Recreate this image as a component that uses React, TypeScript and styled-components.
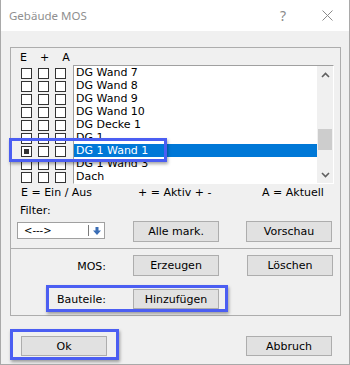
import React from 'react';
import styled, { createGlobalStyle } from 'styled-components';

const GlobalStyle = createGlobalStyle`
  html, body {
    margin: 0;
    padding: 0;
    background: #f0f0f0;
  }
  body {
    font-family: "DejaVu Sans", Tahoma, sans-serif;
    font-size: 11px;
    color: #000;
  }
`;

const items = [
  'DG Wand 7',
  'DG Wand 8',
  'DG Wand 9',
  'DG Wand 10',
  'DG Decke 1',
  'DG 1',
  'DG 1 Wand 1',
  'DG 1 Wand 3',
  'Dach',
];

const SELECTED = 6;

const Chevron = ({ up }: { up?: boolean }) => (
  <svg width="9" height="6" viewBox="0 0 9 6">
    <polyline
      points={up ? '1,5 4.5,1.5 8,5' : '1,1 4.5,4.5 8,1'}
      fill="none"
      stroke="#606060"
      strokeWidth="1.6"
    />
  </svg>
);

const App = () => {
  return (
    <>
      <GlobalStyle />
      <Window>
        <TitleBar>
          <Title>Gebäude MOS</Title>
          <CaptionButton>?</CaptionButton>
          <CaptionButton>
            <svg width="11" height="11" viewBox="0 0 11 11">
              <path d="M0.5 0.5L10.5 10.5M10.5 0.5L0.5 10.5" stroke="#8a8a8a" strokeWidth="1" />
            </svg>
          </CaptionButton>
        </TitleBar>

        <Content>
          <GroupBox>
            <HeaderRow>
              <span>E</span>
              <span>+</span>
              <span>A</span>
            </HeaderRow>

            <ListArea>
              <CheckGrid>
                {items.map((_, i) =>
                  [0, 1, 2].map((c) => (
                    <CheckBox key={`${i}-${c}`}>
                      {i === SELECTED && c === 0 && <CheckMark />}
                    </CheckBox>
                  ))
                )}
              </CheckGrid>

              <ListBox>
                <Rows>
                  {items.map((name, i) => (
                    <Row key={name} $selected={i === SELECTED}>
                      {name}
                    </Row>
                  ))}
                </Rows>
                <ScrollBar>
                  <ScrollArrow>
                    <Chevron up />
                  </ScrollArrow>
                  <Track>
                    <Thumb />
                  </Track>
                  <ScrollArrow>
                    <Chevron />
                  </ScrollArrow>
                </ScrollBar>
              </ListBox>
            </ListArea>

            <Legend>
              <span>E = Ein / Aus</span>
              <span>+ = Aktiv + -</span>
              <span>A = Aktuell</span>
            </Legend>

            <FilterLabel>Filter:</FilterLabel>

            <ControlRow>
              <Combo>
                <ComboText>&lt;---&gt;</ComboText>
                <ComboDrop>
                  <svg width="8" height="8" viewBox="0 0 8 8">
                    <path d="M2.5 0h3v3.5h2.5L4 8 0 3.5h2.5z" fill="#3a6db5" />
                  </svg>
                </ComboDrop>
              </Combo>
              <Button $gap={28}>Alle mark.</Button>
              <Button $gap={27}>Vorschau</Button>
            </ControlRow>

            <Divider />

            <ActionRow $top={6}>
              <RightLabel>MOS:</RightLabel>
              <Button $gap={27}>Erzeugen</Button>
              <Button $gap={28}>Löschen</Button>
            </ActionRow>

            <ActionRow $top={13}>
              <LeftLabel>Bauteile:</LeftLabel>
              <Button $h={20}>Hinzufügen</Button>
            </ActionRow>
          </GroupBox>

          <Footer>
            <Button $gap={20} $h={20}>Ok</Button>
            <Button $gap={139} $h={20}>Abbruch</Button>
          </Footer>
        </Content>

        <Highlight $x={8} $y={138} $w={158} $h={24} />
        <Highlight $x={45} $y={285} $w={182} $h={27} />
        <Highlight $x={9} $y={329} $w={109} $h={31} />
      </Window>
    </>
  );
};

const Window = styled.div`
  position: relative;
  width: 350px;
  height: 365px;
  box-sizing: border-box;
  border: 1px solid #a9a9a9;
  border-top: none;
  background: #f0f0f0;
  overflow: hidden;
`;

const TitleBar = styled.div`
  height: 31px;
  background: #fff;
  display: flex;
  align-items: center;
`;

const Title = styled.div`
  flex: 1;
  padding-left: 8px;
  font-family: "Noto Sans", "Segoe UI", sans-serif;
  font-size: 11.5px;
  color: #8f8f8f;
`;

const CaptionButton = styled.div`
  width: 44px;
  height: 31px;
  display: flex;
  align-items: center;
  justify-content: center;
  font-family: "Noto Sans", sans-serif;
  font-size: 14px;
  color: #8a8a8a;
`;

const Content = styled.div`
  padding: 16px 0 0 9px;
`;

const GroupBox = styled.div`
  width: 331px;
  height: 269px;
  box-sizing: border-box;
  border: 1px solid #adadad;
  display: flex;
  flex-direction: column;
`;

const HeaderRow = styled.div`
  height: 17px;
  display: flex;
  align-items: center;
  gap: 13px;
  padding-left: 9px;
  padding-top: 1px;
  box-sizing: border-box;
`;

const ListArea = styled.div`
  height: 119px;
  display: flex;
  align-items: flex-start;
`;

const CheckGrid = styled.div`
  display: grid;
  grid-template-columns: repeat(3, 11px);
  grid-auto-rows: 11px;
  column-gap: 6px;
  row-gap: 2px;
  margin: 3px 0 0 10px;
`;

const CheckBox = styled.div`
  box-sizing: border-box;
  border: 1px solid #333;
  background: #fff;
  display: flex;
  align-items: center;
  justify-content: center;
`;

const CheckMark = styled.div`
  width: 5px;
  height: 5px;
  background: #333;
`;

const ListBox = styled.div`
  width: 261px;
  height: 119px;
  margin-left: 7px;
  box-sizing: border-box;
  border: 1px solid;
  border-color: #a0a0a0 #fff #fff #a0a0a0;
  background: #fff;
  display: flex;
`;

const Rows = styled.div`
  flex: 1;
`;

const Row = styled.div<{ $selected?: boolean }>`
  height: 13px;
  line-height: 13px;
  padding-left: 2px;
  white-space: nowrap;
  background: ${({ $selected }) => ($selected ? '#0078d7' : 'transparent')};
  color: ${({ $selected }) => ($selected ? '#fff' : '#000')};
`;

const ScrollBar = styled.div`
  width: 16px;
  background: #f0f0f0;
  display: flex;
  flex-direction: column;
`;

const ScrollArrow = styled.div`
  height: 17px;
  display: flex;
  align-items: center;
  justify-content: center;
`;

const Track = styled.div`
  flex: 1;
`;

const Thumb = styled.div`
  margin: 46px 1px 0 1px;
  height: 21px;
  background: #cdcdcd;
`;

const Legend = styled.div`
  height: 17px;
  line-height: 17px;
  display: grid;
  grid-template-columns: 117px 124px 1fr;
  padding-left: 10px;
  white-space: nowrap;
`;

const FilterLabel = styled.div`
  height: 20px;
  line-height: 20px;
  padding-left: 9px;
`;

const ControlRow = styled.div`
  display: flex;
  align-items: flex-start;
`;

const Combo = styled.div`
  margin: 1px 0 0 6px;
  width: 88px;
  height: 17px;
  box-sizing: border-box;
  border: 1px solid #a0a0a0;
  background: #fff;
  display: flex;
`;

const ComboText = styled.div`
  flex: 1;
  padding-left: 6px;
  line-height: 15px;
  font-size: 10px;
`;

const ComboDrop = styled.div`
  width: 15px;
  margin: 2px 0;
  border-left: 1px solid #7a7a7a;
  display: flex;
  align-items: center;
  justify-content: center;
`;

const Button = styled.button<{ $gap?: number; $h?: number }>`
  width: 86px;
  height: ${({ $h }) => $h ?? 21}px;
  margin-left: ${({ $gap }) => $gap ?? 0}px;
  padding: 0;
  box-sizing: border-box;
  border: 1px solid #adadad;
  background: #e1e1e1;
  font-family: "DejaVu Sans", Tahoma, sans-serif;
  font-size: 11px;
  color: #000;
`;

const Divider = styled.div`
  margin-top: 6px;
  height: 1px;
  background: #adadad;
`;

const ActionRow = styled.div<{ $top: number }>`
  margin-top: ${({ $top }) => $top}px;
  display: flex;
  align-items: center;
`;

const RightLabel = styled.div`
  width: 95px;
  text-align: right;
  padding-top: 2px;
`;

const LeftLabel = styled.div`
  width: 76px;
  margin-left: 46px;
  padding-top: 1px;
`;

const Footer = styled.div`
  margin-top: 20px;
  margin-left: -9px;
  display: flex;
`;

const Highlight = styled.div<{ $x: number; $y: number; $w: number; $h: number }>`
  position: absolute;
  left: ${({ $x }) => $x}px;
  top: ${({ $y }) => $y}px;
  width: ${({ $w }) => $w}px;
  height: ${({ $h }) => $h}px;
  box-sizing: border-box;
  border: 3px solid #4b5ef2;
  box-shadow: 1px 2px 3px rgba(0, 0, 0, 0.35);
  pointer-events: none;
`;

export default App;
